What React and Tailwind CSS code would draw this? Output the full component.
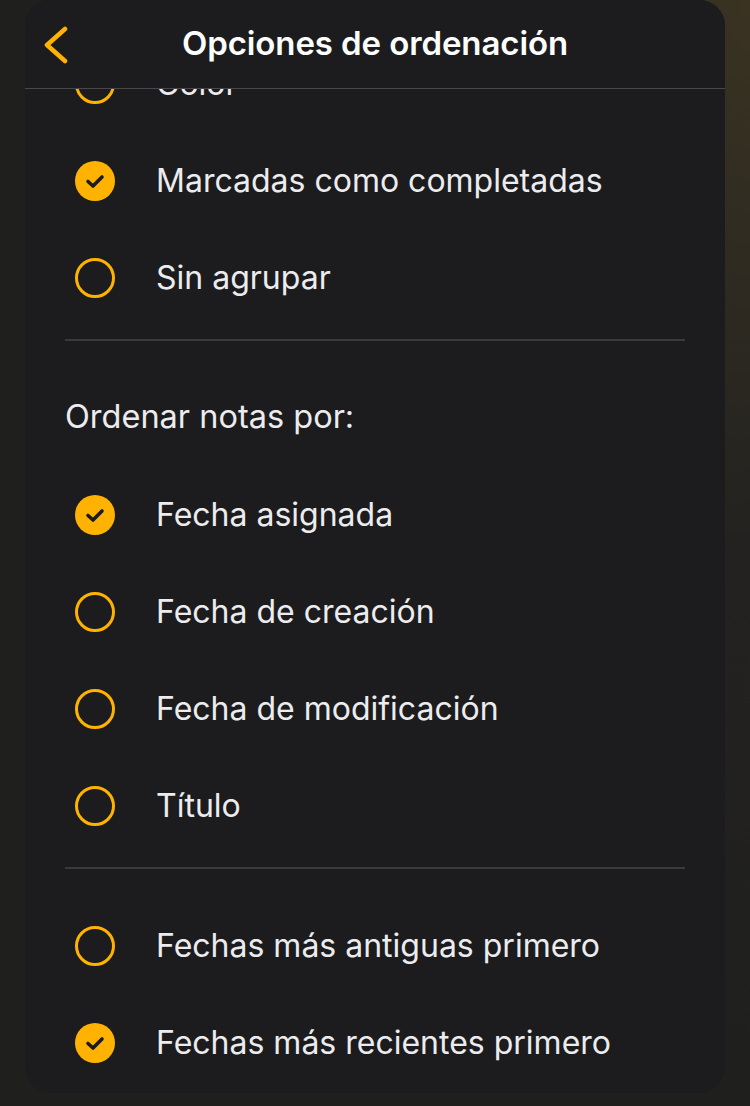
const font = { fontFamily: 'Inter, "Noto Sans", sans-serif' };

function Radio({ checked }) {
  if (checked) {
    return (
      <div className="w-10 h-10 rounded-full bg-[#ffb300] flex items-center justify-center shrink-0">
        <svg width="24" height="24" viewBox="0 0 24 24" fill="none">
          <path d="M5 12.5 L10 17 L19 8" stroke="#1c1c1e" strokeWidth="3.6" strokeLinecap="round" strokeLinejoin="round" />
        </svg>
      </div>
    );
  }
  return <div className="w-10 h-10 rounded-full border-[3px] border-[#ffb300] shrink-0" />;
}

function Option({ label, checked }) {
  return (
    <div className="h-[97px] flex items-center">
      <div className="w-[131px] shrink-0 pl-[50px] flex items-center">
        <Radio checked={checked} />
      </div>
      <span className="text-[32px] text-[#ececef]">{label}</span>
    </div>
  );
}

export default function App() {
  return (
    <div
      className="w-[750px] h-[1106px] overflow-hidden bg-[#1f1f1e] bg-[radial-gradient(ellipse_at_top_right,#3a3322_0%,#232220_35%,#1f1f1e_70%)] px-[25px] pb-[13px]"
      style={font}
    >
      <div className="h-full bg-[#1c1c1e] rounded-[26px] flex flex-col overflow-hidden">
        {/* header */}
        <div className="h-[89px] shrink-0 border-b border-[#48484a] relative z-10 bg-[#1c1c1e] flex items-center justify-center">
          <svg className="absolute left-[16px] top-[26px]" width="30" height="38" viewBox="0 0 30 38" fill="none">
            <path d="M24 3 L6 19 L24 35" stroke="#ffb300" strokeWidth="4.5" strokeLinecap="round" strokeLinejoin="round" />
          </svg>
          <h1 className="text-[33px] font-semibold text-white tracking-[-0.1px]">Opciones de ordenación</h1>
        </div>

        {/* content, scrolled */}
        <div className="flex-1 overflow-hidden">
          <div className="-mt-[54px]">
            <Option label="Color" />
            <Option label="Marcadas como completadas" checked />
            <Option label="Sin agrupar" />

            <div className="mx-10 mt-[13px] h-[2px] bg-[#3a3a3c]" />

            <div className="mt-[28px] h-[97px] flex items-center pl-10">
              <span className="text-[32.5px] text-[#ececef]">Ordenar notas por:</span>
            </div>

            <Option label="Fecha asignada" checked />
            <Option label="Fecha de creación" />
            <Option label="Fecha de modificación" />
            <Option label="Título" />

            <div className="mx-10 mt-[13px] h-[2px] bg-[#3a3a3c]" />

            <div className="mt-[28px]">
              <Option label="Fechas más antiguas primero" />
              <Option label="Fechas más recientes primero" checked />
            </div>
          </div>
        </div>
      </div>
    </div>
  );
}
